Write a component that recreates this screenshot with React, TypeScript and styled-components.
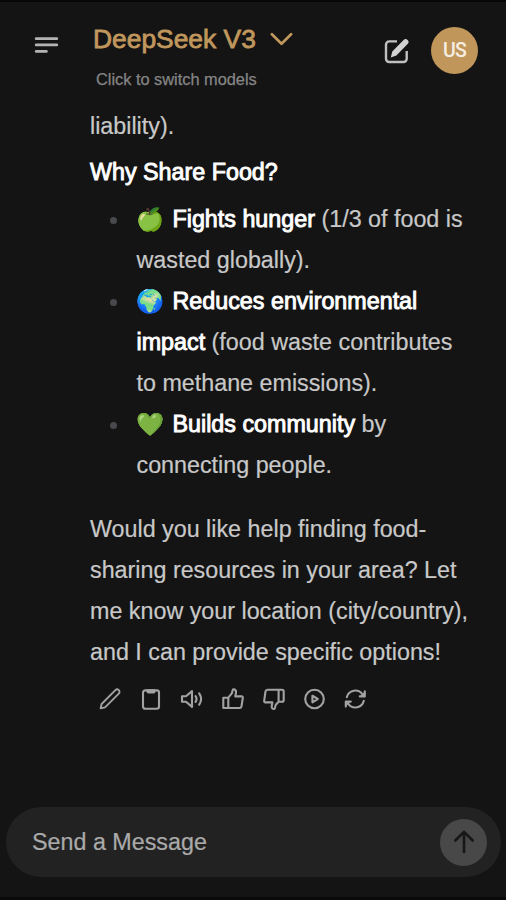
import React from "react";
import styled, { createGlobalStyle } from "styled-components";

const GlobalStyle = createGlobalStyle`
  * { box-sizing: border-box; }
  html, body { margin: 0; background: #141414; }
  button { border: 0; padding: 0; background: none; color: inherit; font: inherit; }
`;

const Screen = styled.div`
  display: flex;
  flex-direction: column;
  width: 506px;
  height: 900px;
  overflow: hidden;
  border-top: 2px solid #060606;
  border-bottom: 3px solid #0b080a;
  background: #141414;
  color: #c8c8c8;
  font-family: "Liberation Sans", Arial, sans-serif;
`;

const Header = styled.header`
  display: flex;
  flex: none;
  height: 98px;
  padding-left: 34px;
`;

const IconButton = styled.button<{ $top: number; $width: number }>`
  display: flex;
  flex: none;
  width: ${(p) => p.$width}px;
  height: 28px;
  margin-top: ${(p) => p.$top}px;
  svg { display: block; flex: none; }
`;

const ModelPicker = styled.button`
  display: flex;
  flex-direction: column;
  align-items: flex-start;
  width: 290px;
  padding-top: 21px;
  text-align: left;
`;

const ModelName = styled.span`
  display: flex;
  align-items: center;
  gap: 14px;
  height: 32px;
  color: #c0975c;
  font-size: 26.4px;
  line-height: 32px;
  white-space: nowrap;
  -webkit-text-stroke: 0.8px #c0975c;
`;

const Hint = styled.span`
  padding: 13px 0 0 3px;
  color: #858585;
  font-size: 16.35px;
  line-height: 22px;
  -webkit-text-stroke: 0.25px #858585;
`;

const Avatar = styled.div`
  display: flex;
  align-items: center;
  justify-content: center;
  width: 47px;
  height: 47px;
  margin: 25px 0 0 20px;
  border-radius: 50%;
  background: #c0965a;
  color: #f6eee2;
  font: 500 19.5px Roboto, sans-serif;
  letter-spacing: -0.8px;
`;

const Message = styled.main`
  flex: none;
  height: 576px;
  padding: 6px 0 0 90px;
  font-size: 23.3px;
  line-height: 41px;
  white-space: nowrap;
  -webkit-text-stroke: 0.2px #c8c8c8;
`;

const Paragraph = styled.p<{ $gap?: number }>`
  margin: ${(p) => p.$gap ?? 0}px 0 0;
`;

const Strong = styled.strong`
  color: #fff;
  font-weight: 400;
  -webkit-text-stroke: 0.9px #fff;
`;

const List = styled.ul`
  margin: 6px 0 0;
  padding: 0;
  list-style: none;
`;

const Item = styled.li`
  display: flex;
  padding-left: 20px;
  &::before {
    content: "";
    flex: none;
    width: 7px;
    height: 7px;
    margin: 18px 19.5px 0 0;
    border-radius: 50%;
    background: #48494d;
  }
`;

const Emoji = styled.span`
  display: inline-block;
  width: 36px;
  height: 30px;
  margin-top: 5px;
  font-family: "Noto Color Emoji", sans-serif;
  font-size: 22.5px;
  line-height: 30px;
  vertical-align: top;
`;

const Actions = styled.div`
  display: flex;
  flex: none;
  gap: 17px;
  height: 24px;
  margin: 11px 0 0 98px;
  color: #a2a2a2;
`;

const ActionIcon = styled.svg`
  display: block;
  width: 24px;
  height: 24px;
  fill: none;
  stroke: currentColor;
  stroke-width: 2.1;
  stroke-linecap: round;
  stroke-linejoin: round;
`;

const Composer = styled.div`
  display: flex;
  flex: none;
  align-items: center;
  justify-content: space-between;
  width: 495px;
  height: 70px;
  margin: 96px 0 0 6px;
  padding: 0 14px 0 26px;
  border-radius: 35px;
  background: #222;
  color: #aaa;
  font-size: 23.3px;
  -webkit-text-stroke: 0.2px #aaa;
`;

const SendButton = styled.button`
  display: flex;
  align-items: center;
  justify-content: center;
  width: 47px;
  height: 47px;
  border-radius: 50%;
  background: #484848;
`;

const actions: { name: string; shape: React.ReactNode }[] = [
  { name: "Edit", shape: <path d="M2.6 21.4 3.6 17 17.4 3.2a2.4 2.4 0 0 1 3.4 3.4L7 20.4z" strokeWidth="1.9" /> },
  {
    name: "Copy",
    shape: (
      <>
        <rect x="4" y="3.4" width="16" height="18.4" rx="2.2" />
        <path d="M8.5 3.2h7v1.2a1 1 0 0 1-1 1h-5a1 1 0 0 1-1-1z" />
      </>
    ),
  },
  { name: "Read aloud", shape: <path d="M2 9.2h4l6-5.1v15.8l-6-5.1H2zM15.6 9.1q1.9 2.9 0 5.8M19.2 6.3q3.8 5.7 0 11.4" /> },
  { name: "Good response", shape: <path d="M7.3 21V10.6l3.5-4.2 1.1-3.9c2.1-.6 3.5.9 3.1 3L14.3 9.4H20.6q1.4 0 1.2 1.6l-1.3 8.3Q20.2 21 18.6 21zM7.3 10.8H2.3V21h5" /> },
  { name: "Bad response", shape: <path d="M16.6 2.8v12l-2.8 3-1.2 4c-1.9.6-3.1-.7-2.9-2.5l.7-3.9H3.4q-1.4 0-1.2-1.7l1.3-9.2Q3.8 2.8 5.4 2.8H20q1.7 0 1.7 1.7V13q0 1.8-1.7 1.8h-3.4" /> },
  { name: "Continue", shape: <><circle cx="11.5" cy="12" r="9.3" /><path d="m9.4 8.7 5.4 3.3-5.4 3.3z" /></> },
  { name: "Regenerate", shape: <><path d="M2.8 10.2a8.7 8.7 0 0 1 15.5-3.1l2 2.3M19.8 13.8a8.7 8.7 0 0 1-15.5 3.1l-2-2.3M20.8 4.4v5h-5M1.8 19.6v-5h5" /><path d="M20.8 4.4v5h-5zM1.8 19.6v-5h5z" fill="currentColor" stroke="none" /></> },
];

export default function App() {
  return (
    <>
      <GlobalStyle />
      <Screen>
        <Header>
          <IconButton $top={34} $width={59} aria-label="Open menu">
            <svg width="26" height="20" viewBox="0 0 26 20" stroke="#b4b4b4" strokeWidth="2.8" strokeLinecap="round">
              <path d="M2.2 2.7h20.6M2.2 8.9h20.6M2.2 15.4h10.2" />
            </svg>
          </IconButton>
          <ModelPicker>
            <ModelName>
              DeepSeek V3
              <svg width="23" height="16" viewBox="0 0 23 16" fill="none" stroke="currentColor" strokeWidth="2.7" strokeLinecap="round" strokeLinejoin="round">
                <path d="m1.9 3.2 9.6 9.5 9.6-9.5" />
              </svg>
            </ModelName>
            <Hint>Click to switch models</Hint>
          </ModelPicker>
          <IconButton $top={35} $width={28} aria-label="New chat">
            <svg width="28" height="28" viewBox="0 0 28 28" fill="none">
              <path d="M14 4.4H6.2a3.2 3.2 0 0 0-3.2 3.2v14.2A3.2 3.2 0 0 0 6.2 25h14.3a3.2 3.2 0 0 0 3.2-3.2V14" stroke="#c0c0c0" strokeWidth="2.4" />
              <path d="m7.8 20.6 1.5-6L20.6 3.1a2.8 2.8 0 0 1 4 4L13.4 18.6z" fill="#d2d2d2" />
            </svg>
          </IconButton>
          <Avatar>US</Avatar>
        </Header>
        <Message>
          <Paragraph>liability).</Paragraph>
          <Paragraph $gap={5}><Strong>Why Share Food?</Strong></Paragraph>
          <List>
            <Item><div><Emoji>🍏</Emoji><Strong>Fights hunger</Strong> (1/3 of food is<br />wasted globally).</div></Item>
            <Item><div><Emoji>🌍</Emoji><Strong>Reduces environmental<br />impact</Strong> (food waste contributes<br />to methane emissions).</div></Item>
            <Item><div><Emoji>💚</Emoji><Strong>Builds community</Strong> by<br />connecting people.</div></Item>
          </List>
          <Paragraph $gap={23}>Would you like help finding food-<br />sharing resources in your area? Let<br />me know your location (city/country),<br />and I can provide specific options!</Paragraph>
        </Message>
        <Actions>
          {actions.map((a) => (
            <ActionIcon key={a.name} viewBox="0 0 24 24" aria-label={a.name}>{a.shape}</ActionIcon>
          ))}
        </Actions>
        <Composer>
          <span>Send a Message</span>
          <SendButton aria-label="Send">
            <svg width="24" height="26" viewBox="0 0 24 26" fill="none" stroke="#171717" strokeWidth="2.6" strokeLinecap="round" strokeLinejoin="round">
              <path d="M12 23V3M3.3 11.5 12 2.8l8.7 8.7" />
            </svg>
          </SendButton>
        </Composer>
      </Screen>
    </>
  );
}
